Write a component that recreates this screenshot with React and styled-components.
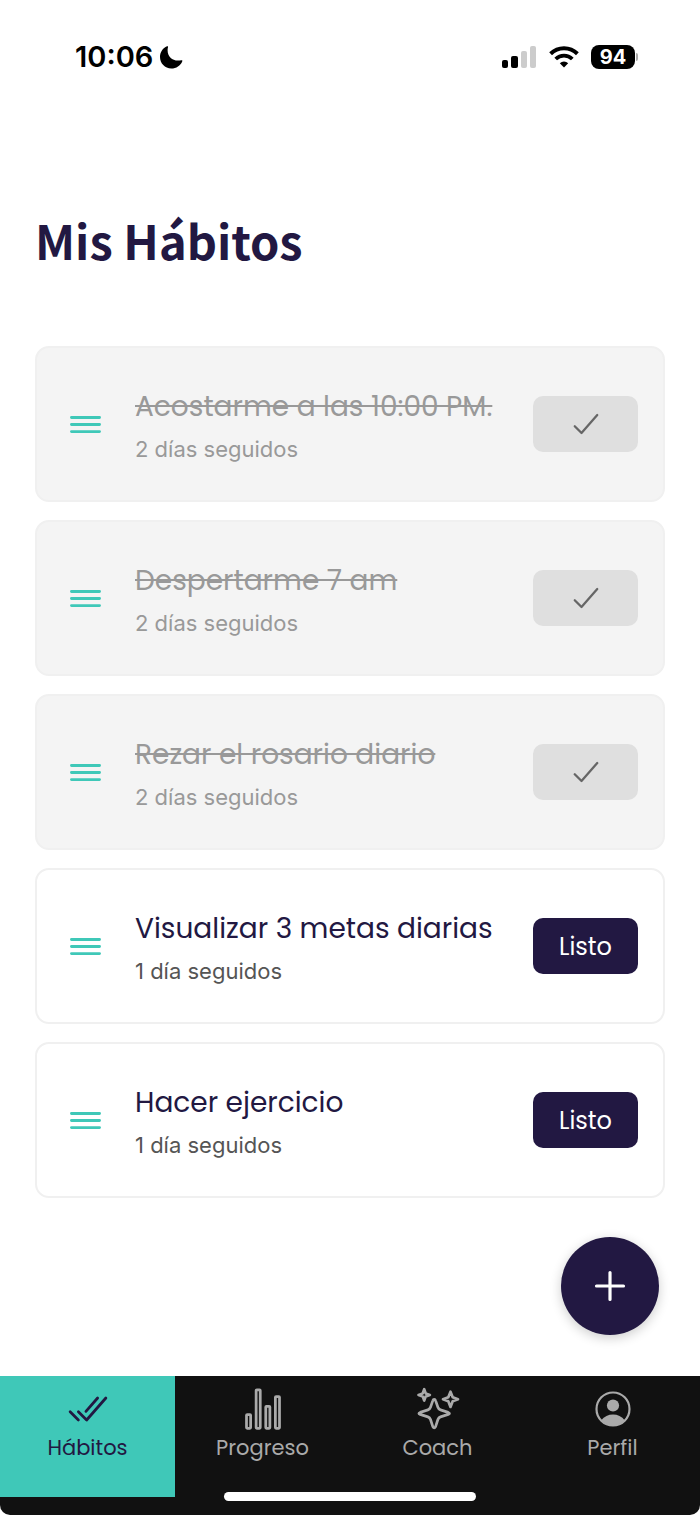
import React from 'react';
import styled, { createGlobalStyle } from 'styled-components';

const habits = [
  { id: 1, name: 'Acostarme a las 10:00 PM.', streak: '2 días seguidos', done: true },
  { id: 2, name: 'Despertarme 7 am', streak: '2 días seguidos', done: true },
  { id: 3, name: 'Rezar el rosario diario', streak: '2 días seguidos', done: true },
  { id: 4, name: 'Visualizar 3 metas diarias', streak: '1 día seguidos', done: false },
  { id: 5, name: 'Hacer ejercicio', streak: '1 día seguidos', done: false },
];

const tabs = [
  { label: 'Hábitos', icon: <DoubleCheckIcon />, active: true },
  { label: 'Progreso', icon: <BarsIcon /> },
  { label: 'Coach', icon: <SparklesIcon /> },
  { label: 'Perfil', icon: <ProfileIcon /> },
];

const App = () => {
  return (
    <Screen>
      <GlobalStyle />
      <StatusBar>
        <Clock>
          <span>10:06</span>
          <MoonIcon />
        </Clock>
        <Indicators>
          <SignalIcon />
          <WifiIcon />
          <Battery>
            <BatteryLevel>94</BatteryLevel>
            <BatteryTip />
          </Battery>
        </Indicators>
      </StatusBar>

      <Main>
        <Title>Mis Hábitos</Title>
        <HabitList>
          {habits.map((habit) => (
            <HabitCard key={habit.id} $done={habit.done}>
              <DragHandle aria-label={`Mover ${habit.name}`}>
                <ReorderIcon />
              </DragHandle>
              <HabitInfo>
                <HabitName $done={habit.done}>{habit.name}</HabitName>
                <Streak $done={habit.done}>{habit.streak}</Streak>
              </HabitInfo>
              <DoneButton $done={habit.done} aria-label={habit.done ? 'Completado' : undefined}>
                {habit.done ? <CheckIcon /> : 'Listo'}
              </DoneButton>
            </HabitCard>
          ))}
        </HabitList>
        <AddButton aria-label="Agregar hábito">
          <PlusIcon />
        </AddButton>
      </Main>

      <TabBar>
        {tabs.map((tab) => (
          <Tab key={tab.label} href="#" $active={tab.active}>
            <TabIcon>{tab.icon}</TabIcon>
            <span>{tab.label}</span>
          </Tab>
        ))}
        <HomeIndicator />
      </TabBar>
    </Screen>
  );
};

export default App;

// Icons
function MoonIcon() {
  return (
    <svg width="24" height="24" viewBox="0 0 24 24" fill="#000" aria-hidden="true">
      <path d="M8 1.300c.8-.3 1.200.2 1 .9-.3 1-.4 2-.4 3 0 6 4.400 10.400 10.400 10.400 1.100 0 2.200-.1 3.300-.4.800-.2 1.300.3 1 1C21.500 20.800 17.300 23.500 12.300 23.500 5.900 23.500 1 18.500 1 12.100 1 7.200 3.900 3 8 1.300z" />
    </svg>
  );
}

function SignalIcon() {
  return (
    <svg width="35" height="23" viewBox="0 0 35 23" aria-hidden="true">
      <rect x="0" y="14" width="6" height="8" rx="2" fill="#000" />
      <rect x="9" y="10" width="7" height="12" rx="2" fill="#000" />
      <rect x="19" y="5" width="6" height="17" rx="2" fill="#ccc" />
      <rect x="28" y="0" width="6" height="22" rx="2" fill="#ccc" />
    </svg>
  );
}

function WifiIcon() {
  return (
    <svg width="30" height="22" viewBox="0 0 30 22" fill="none" stroke="#000" aria-hidden="true">
      <path d="M1.600 7.800a19.200 19.200 0 0 1 26.800 0" strokeWidth="4" />
      <path d="M6.700 13a11.900 11.900 0 0 1 16.600 0" strokeWidth="3.800" />
      <path d="M15 21.500l-4.200-4.200a6 6 0 0 1 8.400 0z" fill="#000" stroke="none" />
    </svg>
  );
}

function ReorderIcon() {
  return (
    <svg width="45" height="45" viewBox="0 0 512 512" fill="none" stroke="currentColor" strokeWidth="32" strokeLinecap="round" aria-hidden="true">
      <path d="M96 256h320M96 176h320M96 336h320" />
    </svg>
  );
}

function CheckIcon() {
  return (
    <svg width="36" height="36" viewBox="0 0 512 512" fill="none" stroke="currentColor" strokeWidth="32" strokeLinecap="round" strokeLinejoin="round" aria-hidden="true">
      <path d="M416 128 192 384l-96-96" />
    </svg>
  );
}

function PlusIcon() {
  return (
    <svg width="48" height="48" viewBox="0 0 512 512" fill="none" stroke="currentColor" strokeWidth="34" strokeLinecap="round" aria-hidden="true">
      <path d="M256 112v288M400 256H112" />
    </svg>
  );
}

function DoubleCheckIcon() {
  return (
    <svg width="44" height="44" viewBox="0 0 512 512" fill="none" stroke="currentColor" strokeWidth="32" strokeLinecap="round" strokeLinejoin="round" aria-hidden="true">
      <path d="M464 128 240 384l-96-96M144 384l-96-96M368 128 232 284" />
    </svg>
  );
}

function BarsIcon() {
  return (
    <svg width="44" height="44" viewBox="0 0 512 512" fill="none" stroke="currentColor" strokeWidth="32" strokeLinejoin="round" aria-hidden="true">
      <rect x="64" y="320" width="48" height="160" rx="8" />
      <rect x="288" y="224" width="48" height="256" rx="8" />
      <rect x="400" y="112" width="48" height="368" rx="8" />
      <rect x="176" y="32" width="48" height="448" rx="8" />
    </svg>
  );
}

function SparklesIcon() {
  return (
    <svg width="44" height="44" viewBox="0 0 44 44" fill="none" stroke="currentColor" strokeWidth="2.700" strokeLinejoin="round" aria-hidden="true">
      <path d="M18.200 12.300q-1 0-1.400 1.300l-2.300 6.700q-.7 2-2.600 2.600l-7.700 2.500q-2.600 1 0 2l7.700 2.500q1.900.6 2.600 2.600l2.300 7.200q1.400 2.600 2.800 0l2.300-7.200q.7-2 2.600-2.600l7.700-2.500q2.600-1 0-2l-7.700-2.500q-1.900-.6-2.600-2.600l-2.300-6.700Q19.200 12.300 18.200 12.300z" />
      <path d="M8.200 2.200l1.500 4.200 4.200 1.500-4.200 1.500-1.500 4.200-1.500-4.200-4.200-1.500 4.200-1.500z" />
      <path d="M34.500 4.700l2.200 5.500 5.300 2-5.300 2-2.200 5.700-2.200-5.700-5.300-2 5.300-2z" />
    </svg>
  );
}

function ProfileIcon() {
  return (
    <svg width="44" height="44" viewBox="0 0 44 44" aria-hidden="true">
      <circle cx="22" cy="22" r="16.500" fill="none" stroke="currentColor" strokeWidth="2.200" />
      <circle cx="22" cy="18.500" r="6.100" fill="currentColor" />
      <path d="M10.300 33.300C13 29.500 17.500 27.600 22 27.600s9 1.900 11.700 5.700A17 17 0 0 1 22 38.600a17 17 0 0 1-11.700-5.300z" fill="currentColor" />
    </svg>
  );
}

// Styled Components
const GlobalStyle = createGlobalStyle`
  * {
    box-sizing: border-box;
  }

  body {
    margin: 0;
    background: #fff;
    font-family: 'Poppins', 'Inter', sans-serif;
  }

  button {
    font-family: inherit;
    border: none;
    padding: 0;
    cursor: pointer;
  }

  svg {
    display: block;
    flex-shrink: 0;
  }
`;

const Screen = styled.div`
  display: flex;
  flex-direction: column;
  min-height: 100vh;
`;

const StatusBar = styled.header`
  display: flex;
  justify-content: space-between;
  align-items: center;
  padding: 36px 62px 0 75px;
  font-family: 'Inter', sans-serif;
`;

const Clock = styled.div`
  display: flex;
  align-items: center;
  gap: 6px;
  font-size: 29px;
  line-height: 42px;
  font-weight: 600;
  color: #000;
`;

const Indicators = styled.div`
  display: flex;
  align-items: center;
  gap: 12px;
`;

const Battery = styled.div`
  display: flex;
  align-items: center;
  gap: 1px;
`;

const BatteryLevel = styled.span`
  width: 44px;
  border-radius: 8px;
  background: #000;
  color: #fff;
  font-size: 20px;
  line-height: 24px;
  font-weight: 700;
  text-align: center;
`;

const BatteryTip = styled.span`
  width: 2px;
  height: 8px;
  border-radius: 0 2px 2px 0;
  background: #aaa;
`;

const Main = styled.main`
  position: relative;
  flex: 1;
  padding: 126px 35px 177px;
`;

const Title = styled.h1`
  margin: 0 0 70px;
  font-family: 'Noto Sans CJK SC', sans-serif;
  font-size: 47px;
  line-height: 72px;
  font-weight: 700;
  color: #221842;
`;

const HabitList = styled.ul`
  display: flex;
  flex-direction: column;
  gap: 18px;
  margin: 0;
  padding: 0;
  list-style: none;
`;

const HabitCard = styled.li`
  display: flex;
  align-items: center;
  padding: 34px 25px 34px 26px;
  border: 2px solid #f0f0f0;
  border-radius: 14px;
  background: ${({ $done }) => ($done ? '#f4f4f4' : '#fff')};
`;

const DragHandle = styled.button`
  margin-right: 27px;
  background: none;
  color: #3fc8b8;
`;

const HabitInfo = styled.div`
  flex: 1;
  min-width: 0;
`;

const HabitName = styled.h2`
  margin: 0;
  font-size: 28px;
  line-height: 50px;
  font-weight: 400;
  white-space: nowrap;
  color: ${({ $done }) => ($done ? '#999' : '#221842')};
  text-decoration: ${({ $done }) => ($done ? 'line-through' : 'none')};
  text-decoration-thickness: 2px;
`;

const Streak = styled.p`
  margin: 0;
  font-family: 'Inter', sans-serif;
  font-size: 22px;
  line-height: 34px;
  color: ${({ $done }) => ($done ? '#999' : '#555')};
`;

const DoneButton = styled.button`
  display: flex;
  justify-content: center;
  align-items: center;
  width: 105px;
  height: 56px;
  border-radius: 10px;
  font-size: 24px;
  background: ${({ $done }) => ($done ? '#dfdfdf' : '#221842')};
  color: ${({ $done }) => ($done ? '#666' : '#fff')};
`;

const AddButton = styled.button`
  position: absolute;
  right: 41px;
  bottom: 41px;
  display: flex;
  justify-content: center;
  align-items: center;
  width: 98px;
  height: 98px;
  border-radius: 50%;
  background: #221842;
  color: #fff;
  box-shadow: 0 3px 12px rgba(0, 0, 0, 0.2);
`;

const TabBar = styled.nav`
  position: relative;
  display: flex;
  padding-bottom: 18px;
  border-radius: 0 0 10px 10px;
  overflow: hidden;
  background: #111;
`;

const Tab = styled.a`
  flex: 1;
  display: flex;
  flex-direction: column;
  align-items: center;
  height: 121px;
  padding-top: 11px;
  font-size: 21px;
  line-height: 34px;
  text-decoration: none;
  background: ${({ $active }) => ($active ? '#3fc8b8' : 'transparent')};
  color: ${({ $active }) => ($active ? '#221842' : '#aaa')};
`;

const TabIcon = styled.span`
  display: flex;
`;

const HomeIndicator = styled.div`
  position: absolute;
  left: 50%;
  bottom: 14px;
  width: 36%;
  height: 9px;
  border-radius: 5px;
  background: #fff;
  transform: translateX(-50%);
`;
